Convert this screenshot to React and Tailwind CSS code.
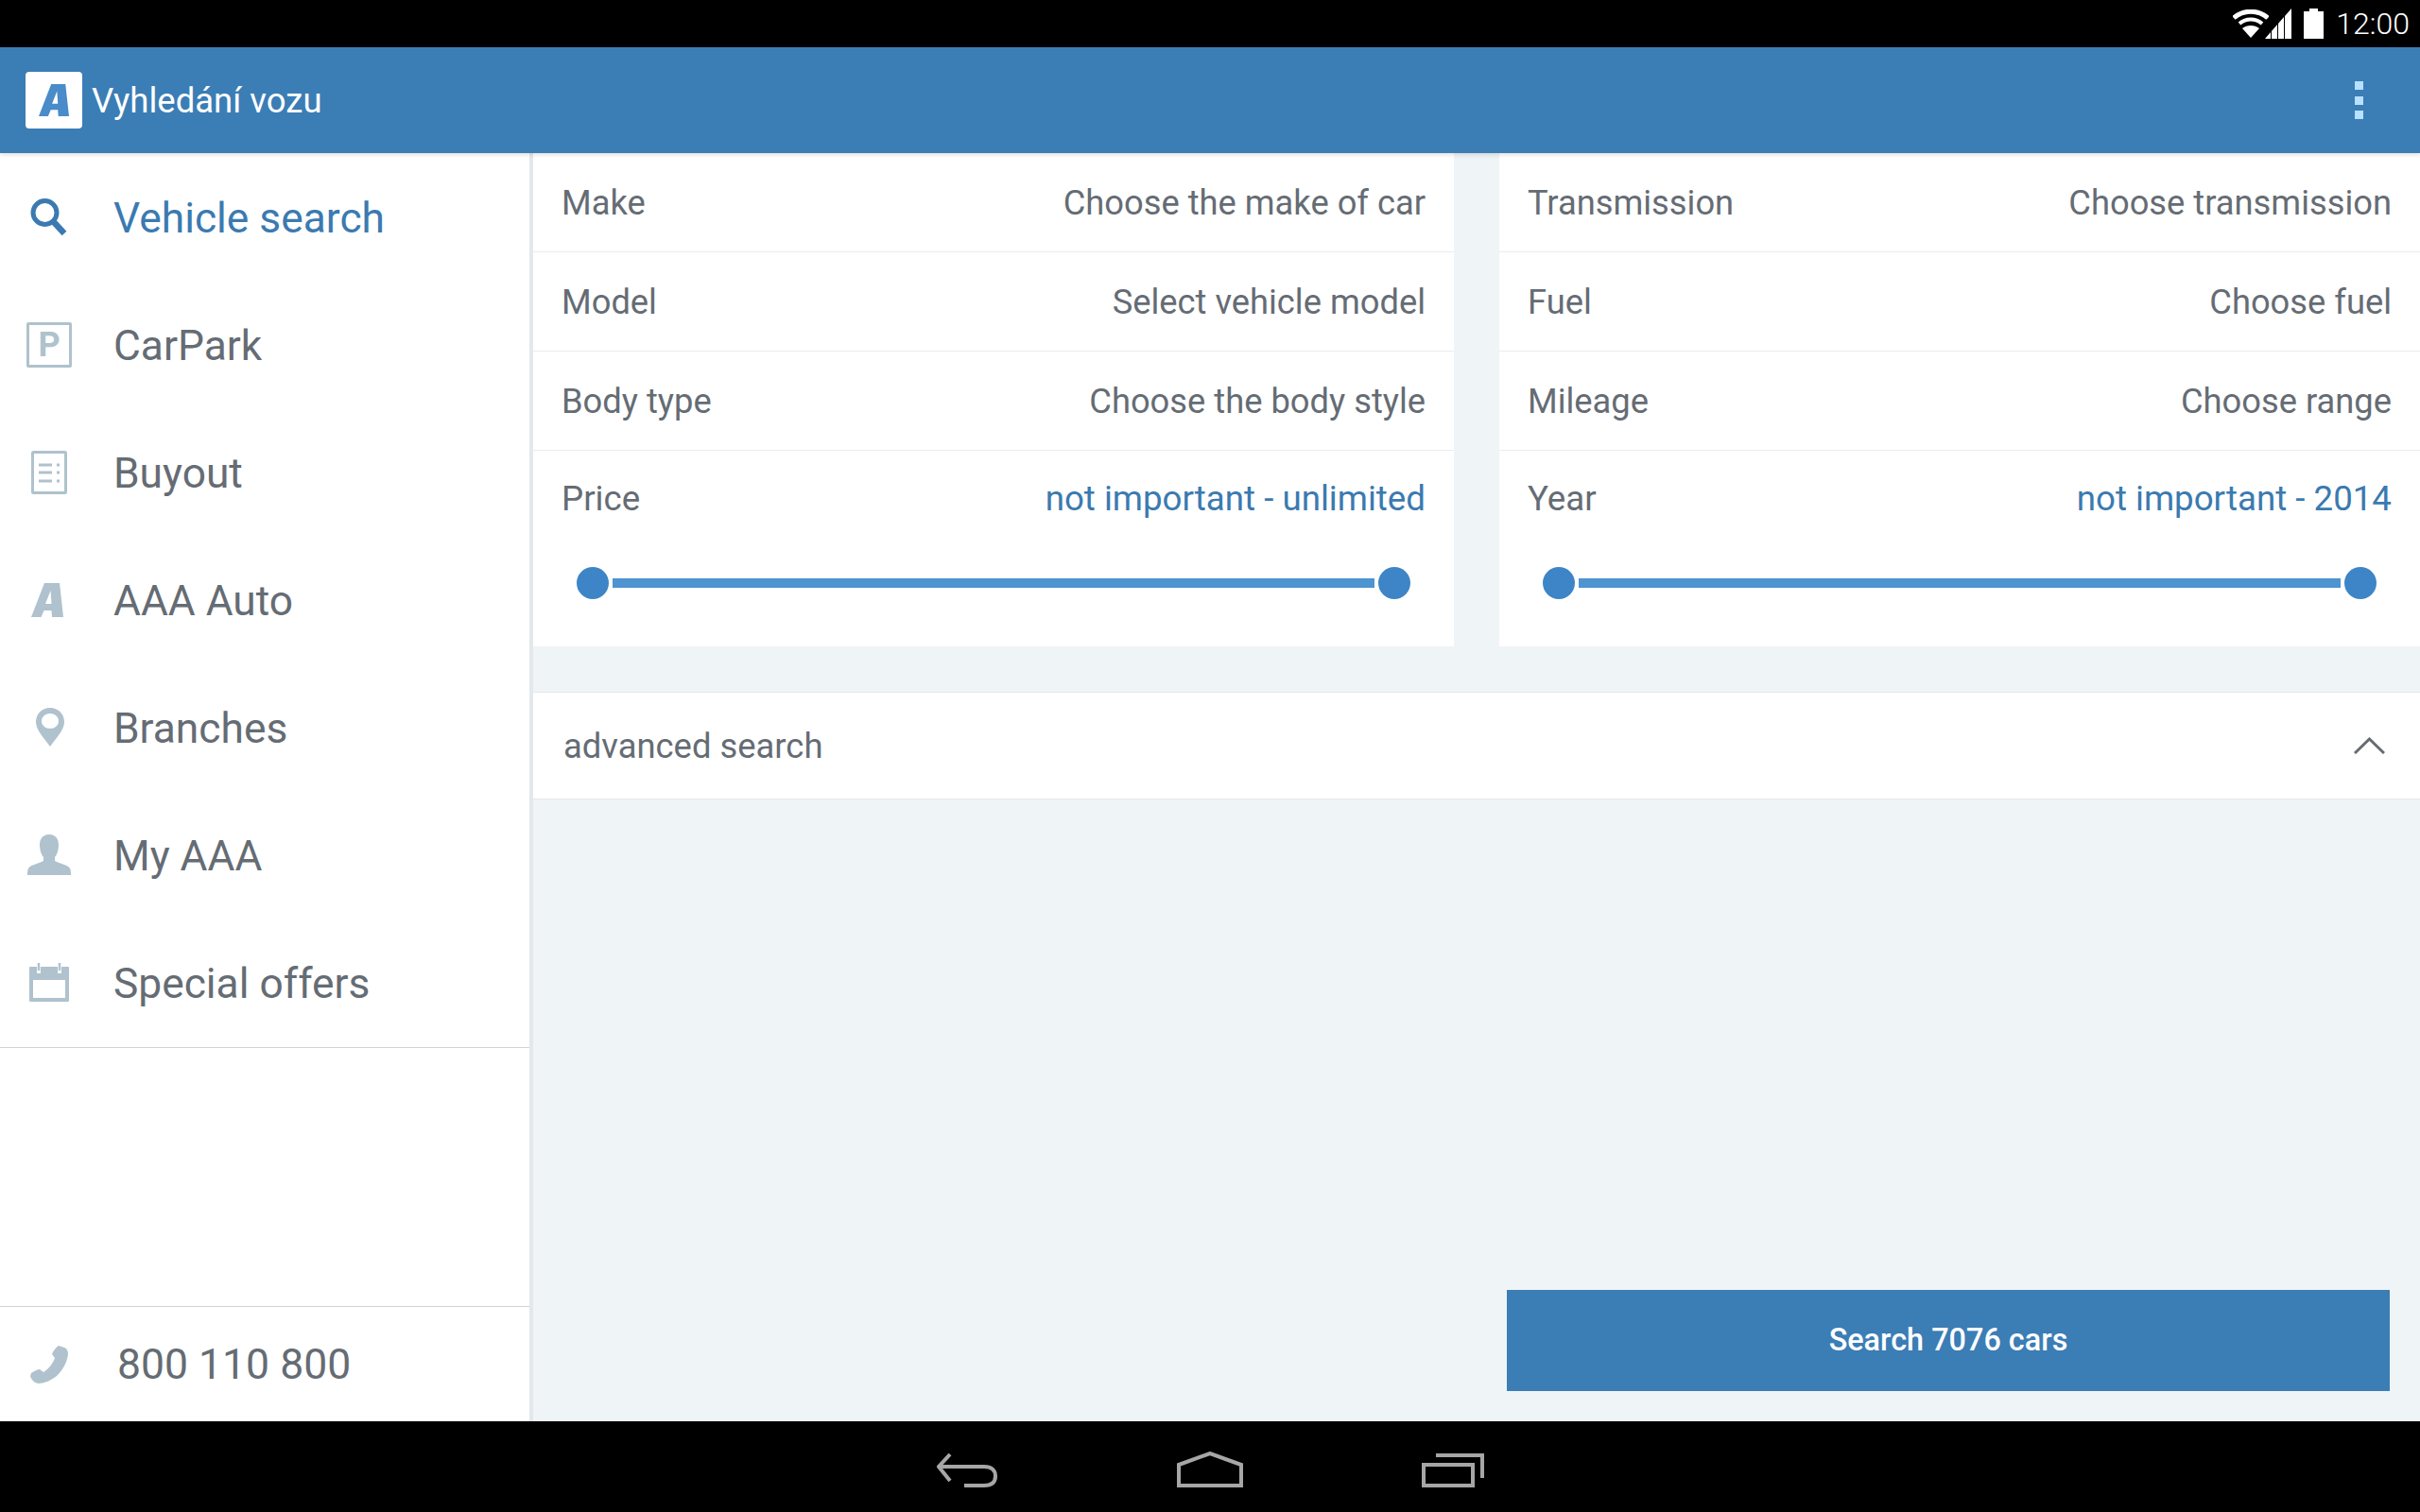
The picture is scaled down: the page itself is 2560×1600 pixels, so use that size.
const navItems = [
  { label: "Vehicle search", icon: SearchIcon, active: true },
  { label: "CarPark", icon: ParkIcon },
  { label: "Buyout", icon: DocIcon },
  { label: "AAA Auto", icon: LogoIcon },
  { label: "Branches", icon: PinIcon },
  { label: "My AAA", icon: PersonIcon },
  { label: "Special offers", icon: CalendarIcon },
];

const leftRows = [
  ["Make", "Choose the make of car"],
  ["Model", "Select vehicle model"],
  ["Body type", "Choose the body style"],
];

const rightRows = [
  ["Transmission", "Choose transmission"],
  ["Fuel", "Choose fuel"],
  ["Mileage", "Choose range"],
];

function SearchIcon() {
  return (
    <svg width="40" height="40" viewBox="0 0 40 40" fill="none" className="ml-[32px] mr-[48px] shrink-0">
      <circle cx="15.5" cy="15" r="12.5" stroke="#3b7ab0" strokeWidth="5" />
      <path d="M24 24 L36 37" stroke="#3b7ab0" strokeWidth="6.5" />
    </svg>
  );
}

function ParkIcon() {
  return (
    <div className="ml-[28px] mr-[44px] w-[48px] h-[48px] shrink-0 border-[3px] border-[#afc2cd] rounded-[2px] flex items-center justify-center text-[#afc2cd] text-[36px] font-bold leading-none font-['Roboto',sans-serif]">
      P
    </div>
  );
}

function DocIcon() {
  return (
    <svg width="38" height="46" viewBox="0 0 38 46" fill="none" className="ml-[33px] mr-[49px] shrink-0">
      <rect x="1.5" y="1.5" width="35" height="43" rx="1" stroke="#afc2cd" strokeWidth="3" />
      <path d="M8 15 H22 M8 23 H22 M8 32 H22 M27 15 H30 M27 23 H30 M27 32 H30" stroke="#afc2cd" strokeWidth="3" />
    </svg>
  );
}

function LogoIcon() {
  return (
    <svg width="34" height="36" viewBox="0 0 34 36" className="ml-[33px] mr-[53px] shrink-0">
      <path
        fillRule="evenodd"
        fill="#afc2cd"
        d="M0 36 L14 0 H30 L34 36 H22 L21.5 29 H13.5 L10.5 36 Z M15 22 H21.5 L20.5 8 Z"
      />
    </svg>
  );
}

function PinIcon() {
  return (
    <svg width="30" height="41" viewBox="0 0 30 41" className="ml-[38px] mr-[52px] shrink-0">
      <path
        fillRule="evenodd"
        fill="#afc2cd"
        d="M15 0 C6.5 0 0 6.5 0 15 C0 24 9 32 15 41 C21 32 30 24 30 15 C30 6.5 23.5 0 15 0 Z M15 6 C20.5 6 24 10 24 14 C24 18.5 20 22 15 22 C10 22 6 18.5 6 14 C6 10 9.5 6 15 6 Z"
      />
    </svg>
  );
}

function PersonIcon() {
  return (
    <svg width="46" height="43" viewBox="0 0 46 43" className="ml-[29px] mr-[45px] shrink-0">
      <path
        fill="#afc2cd"
        d="M23 0 C16 0 13 5 13 11 C13 17 15 22 17 24 L17 28 C12 31 3 32 1 36 C0 38 0 40 0 43 H46 C46 40 46 38 45 36 C43 32 34 31 29 28 L29 24 C31 22 33 17 33 11 C33 5 30 0 23 0 Z"
      />
    </svg>
  );
}

function CalendarIcon() {
  return (
    <svg width="42" height="41" viewBox="0 0 42 41" className="ml-[31px] mr-[47px] shrink-0">
      <path
        fillRule="evenodd"
        fill="#afc2cd"
        d="M1 4 H8 V11 H12 V4 H30 V11 H34 V4 H41 A1 1 0 0 1 42 5 V40 A1 1 0 0 1 41 41 H1 A1 1 0 0 1 0 40 V5 A1 1 0 0 1 1 4 Z M4 18 V37 H38 V18 Z"
      />
      <path d="M10 0 V8 M32 0 V8" stroke="#afc2cd" strokeWidth="2.5" />
    </svg>
  );
}

function PhoneIcon() {
  return (
    <svg width="40" height="40" viewBox="0 0 40 40" className="ml-[32px] mr-[52px] shrink-0">
      <path
        fill="#afc2cd"
        d="M30 0 L36 2 C39 3 40 6 40 9 C39 18 34 26 28 32 C22 37 14 40 9 40 C5 40 1 36 0 32 L1 29 C3 28 7 25 10 25 L14 28 C19 25 24 19 26 13 L23 9 C24 6 27 2 30 0 Z"
      />
    </svg>
  );
}

function StatusIcons() {
  return (
    <div className="flex items-center">
      <svg width="38" height="30" viewBox="0 0 38 30" fill="none" className="mr-[-4px]">
        <path d="M1 9 C11 0 27 0 37 9" stroke="white" strokeWidth="5" />
        <path d="M7 15 C14 9 24 9 31 15" stroke="white" strokeWidth="4" />
        <path d="M19 30 L10 20 C15 16 23 16 28 20 Z" fill="white" />
      </svg>
      <svg width="28" height="32" viewBox="0 0 28 32" fill="white" className="mr-[13px]">
        <path d="M0 32 L6 25 V32 Z M7 24 L13 17 V32 H7 Z M14 16 L20 9 V32 H14 Z M21 8 L28 0 V32 H21 Z" />
      </svg>
      <svg width="21" height="32" viewBox="0 0 21 32" fill="white" className="mr-[13px]">
        <path d="M6 0 H15 V3 H21 V32 H0 V3 H6 Z" />
      </svg>
      <span className="text-[32px] leading-none font-light text-white mr-[11px]">12:00</span>
    </div>
  );
}

function Row({ label, value }) {
  return (
    <div className="h-[105px] px-[30px] pt-[2px] flex items-center justify-between border-b border-[#e9edf0] text-[36.3px] text-[#656c74]">
      <span>{label}</span>
      <span>{value}</span>
    </div>
  );
}

function RangeBlock({ label, value }) {
  return (
    <div className="h-[207px] px-[30px] pt-[26px]">
      <div className="flex items-center justify-between text-[36.7px] leading-[50px]">
        <span className="text-[#656c74]">{label}</span>
        <span className="text-[#3b7ab0]">{value}</span>
      </div>
      <div className="mt-[47px] px-[16px] flex items-center gap-[4px]">
        <div className="w-[34px] h-[34px] rounded-full bg-[#3d85c6] shrink-0" />
        <div className="flex-1 h-[10px] bg-[#4d94d0]" />
        <div className="w-[34px] h-[34px] rounded-full bg-[#3d85c6] shrink-0" />
      </div>
    </div>
  );
}

function FilterCard({ rows, label, value, className }) {
  return (
    <div className={`bg-white ${className}`}>
      {rows.map(([rowLabel, rowValue]) => (
        <Row key={rowLabel} label={rowLabel} value={rowValue} />
      ))}
      <RangeBlock label={label} value={value} />
    </div>
  );
}

export default function App() {
  return (
    <div className="w-[2560px] h-[1600px] flex flex-col overflow-hidden bg-black font-['Roboto',sans-serif]">
      <div className="h-[50px] shrink-0 bg-black flex items-center justify-end">
        <StatusIcons />
      </div>

      <header className="relative z-10 h-[112px] shrink-0 bg-[#3b7db5] flex items-center justify-between shadow-[0_2px_4px_rgba(0,0,0,0.12)]">
        <div className="flex items-center">
          <div className="ml-[27px] w-[60px] h-[60px] rounded-[4px] bg-white flex items-center justify-center">
            <svg width="32" height="34" viewBox="0 0 34 36">
              <path
                fillRule="evenodd"
                fill="#4a8bc9"
                d="M0 36 L14 0 H30 L34 36 H22 L21.5 29 H13.5 L10.5 36 Z M15 22 H21.5 L20.5 8 Z"
              />
            </svg>
          </div>
          <span className="ml-[10px] pt-[3px] text-[36.5px] text-white">Vyhledání vozu</span>
        </div>
        <div className="mr-[60px] flex flex-col gap-[6.5px]">
          <div className="w-[9px] h-[9px] bg-[#b6e1ff]" />
          <div className="w-[9px] h-[9px] bg-[#b6e1ff]" />
          <div className="w-[9px] h-[9px] bg-[#b6e1ff]" />
        </div>
      </header>

      <div className="flex-1 flex min-h-0">
        <aside className="w-[564px] shrink-0 bg-white border-r-[4px] border-[#e3e8ec] flex flex-col">
          <nav className="border-b-[1.5px] border-[#d0d4d6] pb-[1px]">
            {navItems.map(({ label, icon: Icon, active }) => (
              <div
                key={label}
                className={`h-[135px] flex items-center text-[44.3px] ${active ? "text-[#3b7ab0]" : "text-[#656c74]"}`}
              >
                <Icon />
                <span className="pt-[3px]">{label}</span>
              </div>
            ))}
          </nav>
          <div className="flex-1" />
          <div className="h-[122px] border-t-[1.5px] border-[#d0d4d6] flex items-center text-[44.5px] text-[#656c74]">
            <PhoneIcon />
            <span className="pt-[2px]">800 110 800</span>
          </div>
        </aside>

        <main className="flex-1 min-w-0 bg-[#eff4f7] flex flex-col">
          <div className="flex gap-[48px]">
            <FilterCard rows={leftRows} label="Price" value="not important - unlimited" className="w-[974px]" />
            <FilterCard rows={rightRows} label="Year" value="not important - 2014" className="flex-1" />
          </div>

          <div className="mt-[48px] h-[114px] bg-white border-y border-[#e5e8ea] flex items-center justify-between pl-[32px] pr-[37px] text-[36.4px] text-[#656c74]">
            <span className="pt-[3px]">advanced search</span>
            <svg width="33" height="18" viewBox="0 0 33 18" fill="none">
              <path d="M1 17 L16.5 2 L32 17" stroke="#666c72" strokeWidth="3" />
            </svg>
          </div>

          <div className="flex-1 flex items-end justify-end pr-[32px] pb-[32px]">
            <button className="w-[934px] h-[107px] bg-[#3b7db5] text-white text-[32.4px] font-medium">
              Search 7076 cars
            </button>
          </div>
        </main>
      </div>

      <div className="h-[96px] shrink-0 bg-black flex items-start justify-center gap-[189.5px] pl-[1px] pt-[32px]">
        <svg width="64" height="36" viewBox="0 0 64 36" fill="none" className="mt-[2px]">
          <path d="M14 1 L2 14 L14 29 M2 14 H50 C58 14 62 18 62 24 C62 31 58 34 50 34 H29" stroke="#a6a6a6" strokeWidth="4" />
        </svg>
        <svg width="70" height="38" viewBox="0 0 70 38" fill="none">
          <path d="M2 14 L35 2 L68 14 V36 H2 Z" stroke="#a6a6a6" strokeWidth="4" />
        </svg>
        <svg width="66" height="36" viewBox="0 0 66 36" fill="none" className="mt-[2px]">
          <rect x="2" y="12" width="52" height="22" stroke="#a6a6a6" strokeWidth="4" />
          <path d="M15 2 H64 V26" stroke="#a6a6a6" strokeWidth="4" />
        </svg>
      </div>
    </div>
  );
}
